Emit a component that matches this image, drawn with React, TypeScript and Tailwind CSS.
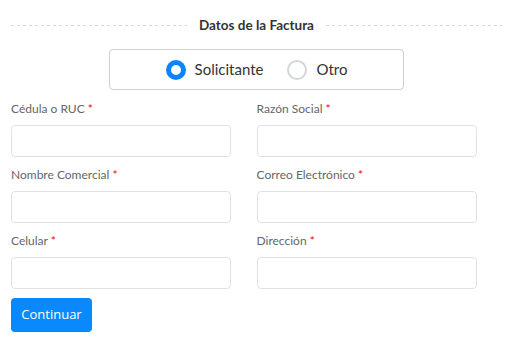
import { useState } from "react";

const fields = [
  "Cédula o RUC",
  "Razón Social",
  "Nombre Comercial",
  "Correo Electrónico",
  "Celular",
  "Dirección",
];

function Radio({ checked, label, onClick }: { checked: boolean; label: string; onClick: () => void }) {
  return (
    <button type="button" onClick={onClick} className="flex items-center gap-[9px]">
      {checked ? (
        <span className="w-[20px] h-[20px] rounded-full border-[5px] border-[#0a84ff] bg-white" />
      ) : (
        <span className="w-[20px] h-[20px] rounded-full border-2 border-[#d3d6da] bg-white" />
      )}
      <span className="text-[15px] text-[#333]">{label}</span>
    </button>
  );
}

export default function App() {
  const [tipo, setTipo] = useState("solicitante");

  return (
    <div className="w-[531px] h-[362px] bg-white pl-[11px] pr-[29px] font-['Lato',sans-serif]">
      {/* Header */}
      <div className="flex items-center gap-[12px] h-[20px] mt-[15px]">
        <div className="flex-1 h-px bg-[repeating-linear-gradient(to_right,#d6d6d6_0_3px,transparent_3px_6px)]" />
        <h2 className="text-[13.5px] font-bold text-[#333]">Datos de la Factura</h2>
        <div className="flex-1 h-px bg-[repeating-linear-gradient(to_right,#d6d6d6_0_3px,transparent_3px_6px)]" />
      </div>

      {/* Tipo */}
      <div className="mx-auto mt-[14px] w-[295px] h-[41px] border border-[#cfcfcf] rounded-[4px] flex items-center justify-center gap-[24px]">
        <Radio checked={tipo === "solicitante"} label="Solicitante" onClick={() => setTipo("solicitante")} />
        <Radio checked={tipo === "otro"} label="Otro" onClick={() => setTipo("otro")} />
      </div>

      {/* Campos */}
      <div className="grid grid-cols-2 mt-[10px]">
        {fields.map((f) => (
          <div key={f} className="mb-[9px]">
            <label className="block text-[12px] leading-[18px] text-[#666] mb-[7px]">
              {f} <span className="text-[#f00]">*</span>
            </label>
            <input className="w-[220px] h-[32px] border border-[#dfe1e5] rounded-[4px] outline-none px-2 text-sm" />
          </div>
        ))}
      </div>

      <button
        type="button"
        className="h-[34px] w-[81px] bg-[#0a89ff] rounded-[4px] text-white text-[13px] font-['Open_Sans',sans-serif]"
      >
        Continuar
      </button>
    </div>
  );
}
